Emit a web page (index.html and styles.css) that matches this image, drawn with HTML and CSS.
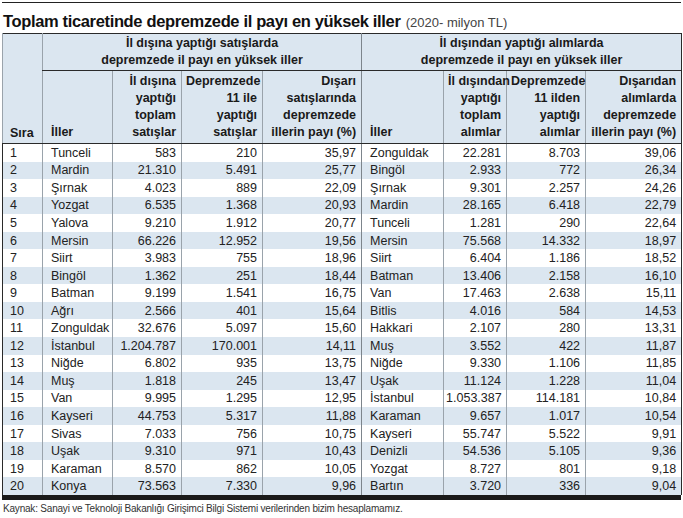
FILE: index.html
```html
<!DOCTYPE html>
<html lang="tr">
<head>
<meta charset="utf-8">
<title>Toplam ticaretinde depremzede il payı en yüksek iller</title>
<link rel="stylesheet" href="styles.css">
</head>
<body>
<div class="page">
  <div class="top-rule"></div>
  <h1 class="title">Toplam ticaretinde depremzede il payı en yüksek iller <span class="sub">(2020- milyon TL)</span></h1>
  <table class="data">
    <colgroup>
      <col class="c-sira"><col class="c-il"><col class="c-n1"><col class="c-n2"><col class="c-n3">
      <col class="c-il2"><col class="c-n4"><col class="c-n5"><col class="c-n6">
    </colgroup>
    <thead>
      <tr class="group-row">
        <th class="h-sira" rowspan="2">Sıra</th>
        <th class="group" colspan="4">İl dışına yaptığı satışlarda<br>depremzede il payı en yüksek iller</th>
        <th class="group" colspan="4">İl dışından yaptığı alımlarda<br>depremzede il payı en yüksek iller</th>
      </tr>
      <tr class="col-row">
        <th class="h-left">İller</th>
        <th class="h-num">İl dışına<br>yaptığı<br>toplam<br>satışlar</th>
        <th class="h-num">Depremzede<br>11 ile<br>yaptığı<br>satışlar</th>
        <th class="h-num">Dışarı<br>satışlarında<br>depremzede<br>illerin payı (%)</th>
        <th class="h-left split">İller</th>
        <th class="h-num">İl dışından<br>yaptığı<br>toplam<br>alımlar</th>
        <th class="h-num">Depremzede<br>11 ilden<br>yaptığı<br>alımlar</th>
        <th class="h-num">Dışarıdan<br>alımlarda<br>depremzede<br>illerin payı (%)</th>
      </tr>
    </thead>
    <tbody>
      <tr><td class="rank">1</td><td class="name">Tunceli</td><td class="num">583</td><td class="num">210</td><td class="num">35,97</td><td class="name split">Zonguldak</td><td class="num">22.281</td><td class="num">8.703</td><td class="num">39,06</td></tr>
      <tr><td class="rank">2</td><td class="name">Mardin</td><td class="num">21.310</td><td class="num">5.491</td><td class="num">25,77</td><td class="name split">Bingöl</td><td class="num">2.933</td><td class="num">772</td><td class="num">26,34</td></tr>
      <tr><td class="rank">3</td><td class="name">Şırnak</td><td class="num">4.023</td><td class="num">889</td><td class="num">22,09</td><td class="name split">Şırnak</td><td class="num">9.301</td><td class="num">2.257</td><td class="num">24,26</td></tr>
      <tr><td class="rank">4</td><td class="name">Yozgat</td><td class="num">6.535</td><td class="num">1.368</td><td class="num">20,93</td><td class="name split">Mardin</td><td class="num">28.165</td><td class="num">6.418</td><td class="num">22,79</td></tr>
      <tr><td class="rank">5</td><td class="name">Yalova</td><td class="num">9.210</td><td class="num">1.912</td><td class="num">20,77</td><td class="name split">Tunceli</td><td class="num">1.281</td><td class="num">290</td><td class="num">22,64</td></tr>
      <tr><td class="rank">6</td><td class="name">Mersin</td><td class="num">66.226</td><td class="num">12.952</td><td class="num">19,56</td><td class="name split">Mersin</td><td class="num">75.568</td><td class="num">14.332</td><td class="num">18,97</td></tr>
      <tr><td class="rank">7</td><td class="name">Siirt</td><td class="num">3.983</td><td class="num">755</td><td class="num">18,96</td><td class="name split">Siirt</td><td class="num">6.404</td><td class="num">1.186</td><td class="num">18,52</td></tr>
      <tr><td class="rank">8</td><td class="name">Bingöl</td><td class="num">1.362</td><td class="num">251</td><td class="num">18,44</td><td class="name split">Batman</td><td class="num">13.406</td><td class="num">2.158</td><td class="num">16,10</td></tr>
      <tr><td class="rank">9</td><td class="name">Batman</td><td class="num">9.199</td><td class="num">1.541</td><td class="num">16,75</td><td class="name split">Van</td><td class="num">17.463</td><td class="num">2.638</td><td class="num">15,11</td></tr>
      <tr><td class="rank">10</td><td class="name">Ağrı</td><td class="num">2.566</td><td class="num">401</td><td class="num">15,64</td><td class="name split">Bitlis</td><td class="num">4.016</td><td class="num">584</td><td class="num">14,53</td></tr>
      <tr><td class="rank">11</td><td class="name">Zonguldak</td><td class="num">32.676</td><td class="num">5.097</td><td class="num">15,60</td><td class="name split">Hakkari</td><td class="num">2.107</td><td class="num">280</td><td class="num">13,31</td></tr>
      <tr><td class="rank">12</td><td class="name">İstanbul</td><td class="num">1.204.787</td><td class="num">170.001</td><td class="num">14,11</td><td class="name split">Muş</td><td class="num">3.552</td><td class="num">422</td><td class="num">11,87</td></tr>
      <tr><td class="rank">13</td><td class="name">Niğde</td><td class="num">6.802</td><td class="num">935</td><td class="num">13,75</td><td class="name split">Niğde</td><td class="num">9.330</td><td class="num">1.106</td><td class="num">11,85</td></tr>
      <tr><td class="rank">14</td><td class="name">Muş</td><td class="num">1.818</td><td class="num">245</td><td class="num">13,47</td><td class="name split">Uşak</td><td class="num">11.124</td><td class="num">1.228</td><td class="num">11,04</td></tr>
      <tr><td class="rank">15</td><td class="name">Van</td><td class="num">9.995</td><td class="num">1.295</td><td class="num">12,95</td><td class="name split">İstanbul</td><td class="num">1.053.387</td><td class="num">114.181</td><td class="num">10,84</td></tr>
      <tr><td class="rank">16</td><td class="name">Kayseri</td><td class="num">44.753</td><td class="num">5.317</td><td class="num">11,88</td><td class="name split">Karaman</td><td class="num">9.657</td><td class="num">1.017</td><td class="num">10,54</td></tr>
      <tr><td class="rank">17</td><td class="name">Sivas</td><td class="num">7.033</td><td class="num">756</td><td class="num">10,75</td><td class="name split">Kayseri</td><td class="num">55.747</td><td class="num">5.522</td><td class="num">9,91</td></tr>
      <tr><td class="rank">18</td><td class="name">Uşak</td><td class="num">9.310</td><td class="num">971</td><td class="num">10,43</td><td class="name split">Denizli</td><td class="num">54.536</td><td class="num">5.105</td><td class="num">9,36</td></tr>
      <tr><td class="rank">19</td><td class="name">Karaman</td><td class="num">8.570</td><td class="num">862</td><td class="num">10,05</td><td class="name split">Yozgat</td><td class="num">8.727</td><td class="num">801</td><td class="num">9,18</td></tr>
      <tr><td class="rank">20</td><td class="name">Konya</td><td class="num">73.563</td><td class="num">7.330</td><td class="num">9,96</td><td class="name split">Bartın</td><td class="num">3.720</td><td class="num">336</td><td class="num">9,04</td></tr>
    </tbody>
  </table>
  <div class="bottom-rule"></div>
  <p class="source">Kaynak: Sanayi ve Teknoloji Bakanlığı Girişimci Bilgi Sistemi verilerinden bizim hesaplamamız.</p>
</div>
</body>
</html>
```

FILE: styles.css
```css
html, body {
  margin: 0;
  padding: 0;
  background: #ffffff;
}

.page {
  width: 679px;
  padding: 2px 0 0 2px;
  font-family: "Liberation Sans", Arial, sans-serif;
  color: #222222;
}

.top-rule {
  height: 1px;
  background: #222222;
}

.title {
  margin: 0;
  height: 30px;
  padding: 0 0 0 1px;
  font-family: "Liberation Sans", Arial, sans-serif;
  font-size: 16.5px;
  font-weight: 700;
  line-height: 36px;
  color: #111111;
  letter-spacing: -0.35px;
  white-space: nowrap;
}

.sub {
  font-size: 13px;
  font-weight: 400;
  letter-spacing: 0;
  color: #444444;
  margin-left: 1px;
}

.data {
  width: 679px;
  table-layout: fixed;
  border-collapse: collapse;
  font-size: 12.5px;
  border: 1px solid #2a2a2a;
  border-bottom: none;
}

.c-sira { width: 40px; }
.c-il   { width: 70px; }
.c-n1   { width: 69px; }
.c-n2   { width: 81px; }
.c-n3   { width: 99px; }
.c-il2  { width: 82px; }
.c-n4   { width: 63px; }
.c-n5   { width: 79px; }
.c-n6   { width: 96px; }

.data thead {
  background: #dbe6f0;
}

.data th {
  font-weight: 700;
  color: #1a1a1a;
  line-height: 17px;
  padding: 0 4px 1px 4px;
  border-left: 1px solid #9aa3ab;
  white-space: nowrap;
}

.group-row th.group {
  height: 34px;
  text-align: center;
  vertical-align: middle;
  border-bottom: 1px solid #2a2a2a;
  padding-top: 1px;
}

.group-row th.group + th.group {
  border-left: 1px solid #7d858c;
}

.h-sira {
  text-align: left;
  vertical-align: bottom;
  padding-left: 7px !important;
  border-bottom: 1px solid #2a2a2a;
}

.col-row th {
  height: 70px;
  vertical-align: bottom;
  padding-bottom: 2px;
  border-bottom: 1px solid #2a2a2a;
}

.col-row .h-left {
  text-align: left;
  padding-left: 8px;
}

.col-row .h-num {
  text-align: right;
  padding-right: 5px;
}

.data td {
  height: 17.55px;
  padding: 0 5px 0 8px;
  line-height: 16px;
  border-left: 1px solid #9aa3ab;
  white-space: nowrap;
  vertical-align: middle;
}

.data tbody tr:nth-child(even) {
  background: #dbe6f0;
}

.data td.rank {
  padding-left: 7px;
  border-left: none;
}

.data td.num {
  text-align: right;
  padding-left: 2px;
}

.data td.split,
.data th.split {
  border-left-color: #7d858c;
}

.bottom-rule {
  height: 5px;
  background: #1a1a1a;
}

.source {
  margin: 2px 0 0 1px;
  font-size: 10px;
  letter-spacing: -0.2px;
  line-height: 13px;
  color: #333333;
}
```
